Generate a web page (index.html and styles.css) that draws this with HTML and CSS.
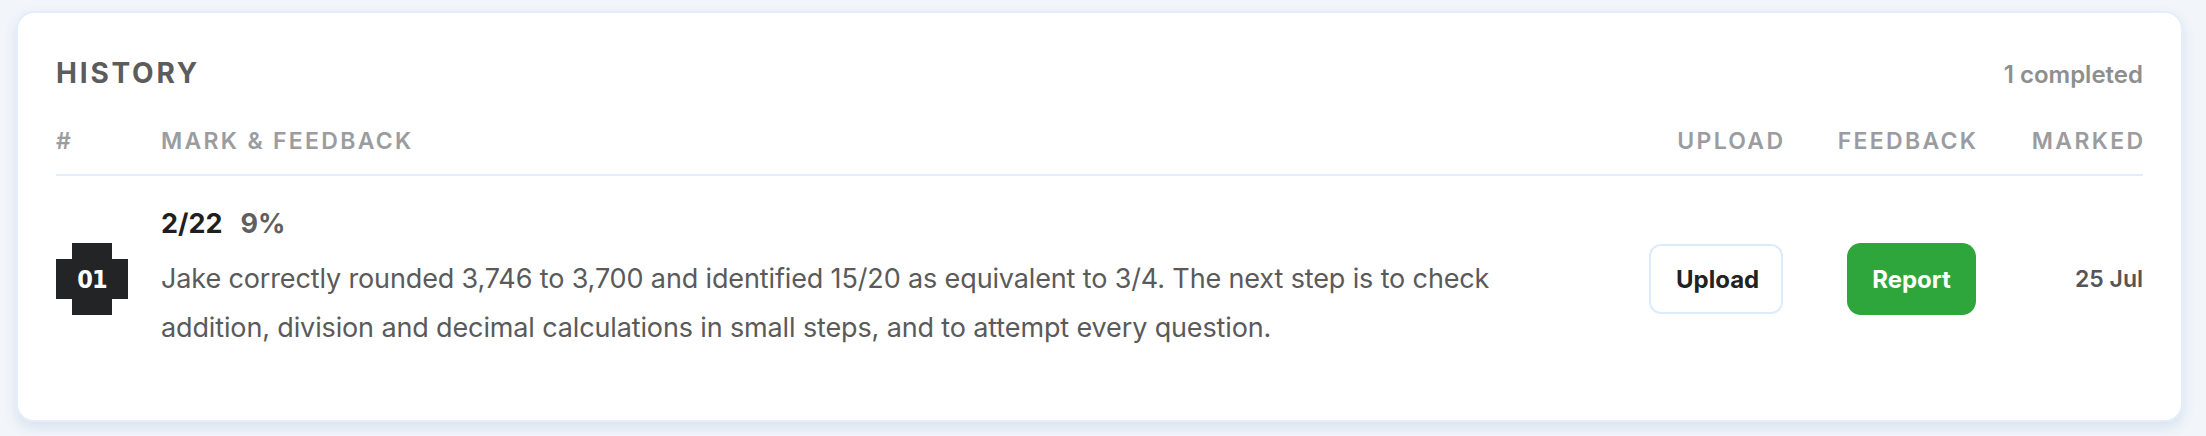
FILE: index.html
```html
<!DOCTYPE html>
<html lang="en">
<head>
    <meta charset="UTF-8">
    <meta name="viewport" content="width=device-width, initial-scale=1.0">
    <title>History</title>
    <link rel="stylesheet" href="styles.css">
</head>
<body>
    <div class="card">
        <div class="card-head">
            <h2 class="card-title">History</h2>
            <span class="count">1 completed</span>
        </div>

        <div class="cols table-head">
            <span>#</span>
            <span>Mark &amp; Feedback</span>
            <span class="cell-end">Upload</span>
            <span class="cell-end">Feedback</span>
            <span class="cell-end">Marked</span>
        </div>

        <div class="cols table-row">
            <div class="badge">01</div>
            <div class="summary">
                <p class="mark"><strong>2/22</strong><span class="pct">9%</span></p>
                <p class="feedback">Jake correctly rounded 3,746 to 3,700 and identified 15/20 as equivalent to 3/4. The next step is to check addition, division and decimal calculations in small steps, and to attempt every question.</p>
            </div>
            <div class="cell-end"><button class="btn btn-upload">Upload</button></div>
            <div class="cell-end"><button class="btn btn-report">Report</button></div>
            <div class="cell-end date">25 Jul</div>
        </div>
    </div>
</body>
</html>
```

FILE: styles.css
```css
body {
    margin: 0;
    padding: 11px 23px 13px 16px;
    background-color: #f2f6fb;
    font-family: Inter, "Noto Sans", sans-serif;
}
.card {
    background-color: #fff;
    border: 2px solid #e4eefa;
    border-radius: 18px;
    padding: 42px 38px 38px 38px;
    box-shadow: 0 6px 14px rgba(40, 70, 120, 0.12);
}
.card-head {
    display: flex;
    justify-content: space-between;
    align-items: baseline;
    height: 36px;
    margin-bottom: 35px;
}
.card-title {
    margin: 0;
    font-size: 28px;
    line-height: 36px;
    font-weight: 700;
    letter-spacing: 0.1em;
    text-transform: uppercase;
    color: #5c5c5c;
}
.count {
    font-size: 24px;
    font-weight: 600;
    color: #8e8e8e;
}
.cols {
    display: grid;
    grid-template-columns: 105px 1fr 134px 193px 167px;
    align-items: center;
}
.cell-end {
    justify-self: end;
}
.table-head {
    padding-bottom: 18px;
    border-bottom: 2px solid #e4eefa;
    font-size: 23px;
    line-height: 30px;
    font-weight: 600;
    letter-spacing: 0.1em;
    text-transform: uppercase;
    color: #9a9c9f;
}
.table-head .cell-end {
    margin-right: -0.1em;
}
.table-row {
    padding: 30px 0;
}
.badge {
    width: 72px;
    height: 72px;
    background-color: #222426;
    clip-path: polygon(16px 0, 56px 0, 56px 16px, 72px 16px, 72px 56px, 56px 56px, 56px 72px, 16px 72px, 16px 56px, 0 56px, 0 16px, 16px 16px);
    display: flex;
    align-items: center;
    justify-content: center;
    color: #fff;
    font-family: "Liberation Sans Narrow", "DejaVu Sans Condensed", sans-serif;
    font-stretch: condensed;
    font-weight: 700;
    font-size: 25px;
    letter-spacing: -1px;
}
.summary p {
    margin: 0;
}
.mark {
    font-size: 27px;
    line-height: 36px;
    margin-bottom: 12px !important;
}
.mark strong {
    color: #1f1f1f;
    font-weight: 700;
}
.pct {
    margin-left: 18px;
    color: #5f5f5f;
    font-weight: 700;
}
.feedback {
    max-width: 1390px;
    font-size: 27px;
    line-height: 49px;
    color: #5a5a5a;
    letter-spacing: -0.005em;
}
.btn {
    height: 70px;
    padding: 0 25px;
    border-radius: 12px;
    font-family: Inter, "Noto Sans", sans-serif;
    font-size: 24px;
    font-weight: 700;
    cursor: pointer;
}
.btn-upload {
    background-color: #fff;
    border: 2px solid #dcebfa;
    color: #222;
    width: 134px;
}
.btn-report {
    background-color: #2ea63b;
    border: none;
    color: #fff;
    width: 129px;
    height: 72px;
    border-radius: 14px;
}
.date {
    font-size: 23px;
    font-weight: 600;
    color: #555;
}
```
